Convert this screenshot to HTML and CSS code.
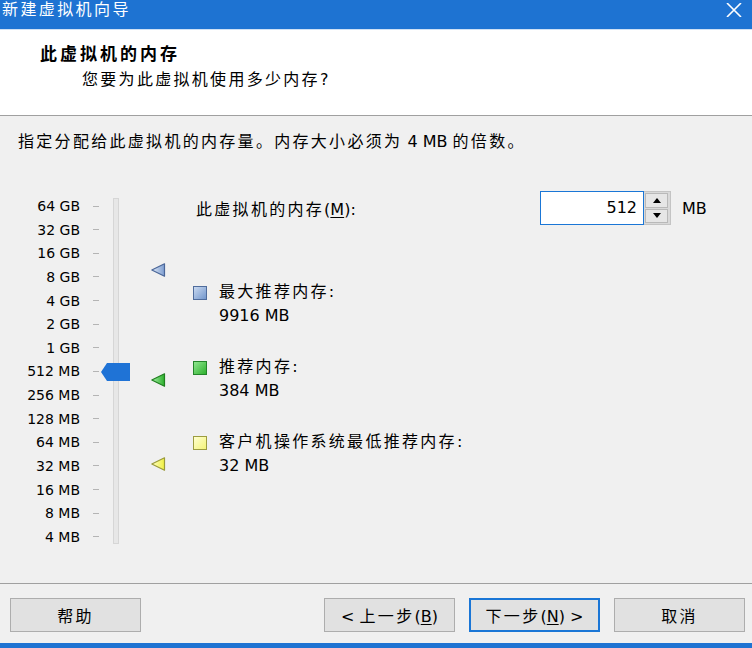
FILE: index.html
```html
<!DOCTYPE html>
<html lang="zh-CN">
<head>
<meta charset="utf-8">
<title>新建虚拟机向导</title>
<link rel="stylesheet" href="styles.css">
</head>
<body>
<div class="window">
  <div class="titlebar">
    <span class="title">新建虚拟机向导</span>
    <svg class="close" width="16" height="14" viewBox="0 0 16 14"><path d="M1 0 L15 14 M15 0 L1 14" stroke="#fff" stroke-width="1.6"/></svg>
  </div>
  <div class="header">
    <div class="h-title">此虚拟机的内存</div>
    <div class="h-sub">您要为此虚拟机使用多少内存?</div>
  </div>
  <div class="content">
    <div class="intro">指定分配给此虚拟机的内存量。内存大小必须为<span class="lat"> 4 MB </span>的倍数。</div>
    <div class="main">
      <div class="slider">
        <div class="scale">
          <div class="lbl">64 GB</div><div class="tick"></div>
          <div class="lbl">32 GB</div><div class="tick"></div>
          <div class="lbl">16 GB</div><div class="tick"></div>
          <div class="lbl">8 GB</div><div class="tick"></div>
          <div class="lbl">4 GB</div><div class="tick"></div>
          <div class="lbl">2 GB</div><div class="tick"></div>
          <div class="lbl">1 GB</div><div class="tick"></div>
          <div class="lbl">512 MB</div><div class="tick"></div>
          <div class="lbl">256 MB</div><div class="tick"></div>
          <div class="lbl">128 MB</div><div class="tick"></div>
          <div class="lbl">64 MB</div><div class="tick"></div>
          <div class="lbl">32 MB</div><div class="tick"></div>
          <div class="lbl">16 MB</div><div class="tick"></div>
          <div class="lbl">8 MB</div><div class="tick"></div>
          <div class="lbl">4 MB</div><div class="tick"></div>
        </div>
        <div class="track"></div>
        <svg class="thumb" style="top:173px" width="29" height="18" viewBox="0 0 29 18"><polygon points="0,9 6,0 29,0 29,18 6,18" fill="#1f73d6"/></svg>
        <svg class="marker" style="top:73px" width="15" height="14" viewBox="0 0 15 14">
          <defs><linearGradient id="gb" x1="0" y1="0" x2="1" y2="0"><stop offset="0" stop-color="#dfe8f6"/><stop offset="1" stop-color="#7d9dd0"/></linearGradient></defs>
          <polygon points="0.8,7 13.5,0.8 13.5,13.2" fill="url(#gb)" stroke="#4a6698" stroke-width="1.2" stroke-linejoin="round"/>
        </svg>
        <svg class="marker" style="top:183px" width="15" height="14" viewBox="0 0 15 14">
          <defs><linearGradient id="gg" x1="0" y1="0" x2="1" y2="0"><stop offset="0" stop-color="#a6eea6"/><stop offset="1" stop-color="#2cb02c"/></linearGradient></defs>
          <polygon points="0.8,7 13.5,0.8 13.5,13.2" fill="url(#gg)" stroke="#1f7f1f" stroke-width="1.2" stroke-linejoin="round"/>
        </svg>
        <svg class="marker" style="top:267px" width="15" height="14" viewBox="0 0 15 14">
          <defs><linearGradient id="gy" x1="0" y1="0" x2="1" y2="0"><stop offset="0" stop-color="#ffffc8"/><stop offset="1" stop-color="#f0f040"/></linearGradient></defs>
          <polygon points="0.8,7 13.5,0.8 13.5,13.2" fill="url(#gy)" stroke="#9a9a3a" stroke-width="1.2" stroke-linejoin="round"/>
        </svg>
      </div>
      <div class="details">
        <div class="mem-row">
          <label class="mem-label">此虚拟机的内存<span class="lat">(<u>M</u>):</span></label>
          <div class="spin">
            <div class="spin-input">512</div>
            <div class="spin-btns">
              <div class="spin-btn"><svg width="8" height="5" viewBox="0 0 8 5"><polygon points="4,0 8,5 0,5" fill="#000"/></svg></div>
              <div class="spin-btn"><svg width="8" height="5" viewBox="0 0 8 5"><polygon points="0,0 8,0 4,5" fill="#000"/></svg></div>
            </div>
          </div>
          <span class="unit">MB</span>
        </div>
        <div class="legend">
          <div class="item">
            <span class="sq sq-blue"></span>
            <div class="txt"><div>最大推荐内存:</div><div class="val">9916 MB</div></div>
          </div>
          <div class="item">
            <span class="sq sq-green"></span>
            <div class="txt"><div>推荐内存:</div><div class="val">384 MB</div></div>
          </div>
          <div class="item">
            <span class="sq sq-yellow"></span>
            <div class="txt"><div>客户机操作系统最低推荐内存:</div><div class="val">32 MB</div></div>
          </div>
        </div>
      </div>
    </div>
  </div>
  <div class="footer">
    <button class="btn">帮助</button>
    <div class="spacer"></div>
    <button class="btn"><span class="lat">&lt; </span>上一步<span class="lat">(<u>B</u>)</span></button>
    <button class="btn btn-primary">下一步<span class="lat">(<u>N</u>) &gt;</span></button>
    <button class="btn">取消</button>
  </div>
</div>
</body>
</html>
```

FILE: styles.css
```css
* { box-sizing: border-box; }
html, body {
  margin: 0;
  padding: 0;
}
body {
  width: 752px;
  height: 648px;
  overflow: hidden;
  background: #f0f0f0;
  font-family: "DejaVu Sans", "Noto Sans CJK SC", sans-serif;
  font-size: 16px;
  color: #000;
}
.window {
  width: 752px;
  height: 648px;
  display: flex;
  flex-direction: column;
  border-bottom: 5px solid #1e73d2;
}
.titlebar {
  height: 30px;
  flex: none;
  background: #1e73d2;
  border-bottom: 1px solid #cfe0f4;
  display: flex;
  justify-content: space-between;
  align-items: flex-start;
  padding: 0 10px 0 2px;
}
.title {
  color: #fff;
  line-height: 20px;
  letter-spacing: 2.4px;
}
.close { margin-top: 3px; }
.header {
  height: 86px;
  flex: none;
  background: #fff;
  border-bottom: 1px solid #a0a0a0;
  padding-top: 12px;
}
.h-title {
  padding-left: 40px;
  font-size: 17px;
  font-weight: bold;
  line-height: 24px;
  letter-spacing: 3px;
}
.h-sub {
  padding-left: 82px;
  margin-top: 3px;
  line-height: 22px;
  letter-spacing: 2.3px;
}
.lat { letter-spacing: 0; }
.content {
  flex: 1;
  overflow: hidden;
  padding-top: 15px;
}
.intro {
  padding-left: 18px;
  line-height: 22px;
  letter-spacing: 2.3px;
}
.main {
  margin-top: 37px;
  display: flex;
}
.slider {
  position: relative;
  flex: none;
  width: 193px;
  height: 360px;
  display: flex;
  align-items: flex-start;
}
.scale {
  display: grid;
  grid-template-columns: 80px 6px;
  column-gap: 13px;
  grid-auto-rows: 23.64px;
  align-items: center;
  padding-top: 4.2px;
  font-size: 14px;
}
.lbl {
  text-align: right;
  line-height: 18px;
  white-space: nowrap;
}
.tick {
  height: 1px;
  background: #b4b4b4;
}
.track {
  margin-left: 14px;
  margin-top: 8px;
  width: 6px;
  height: 346px;
  background: #e7e7e7;
  border: 1px solid #d6d6d6;
}
.thumb {
  position: absolute;
  left: 101px;
}
.marker {
  position: absolute;
  left: 151px;
}
.details {
  flex: 1;
}
.mem-row {
  height: 36px;
  display: flex;
  align-items: center;
}
.mem-label {
  width: 347px;
  padding-left: 3px;
  letter-spacing: 2.3px;
}
.spin {
  display: flex;
  height: 34px;
  width: 131px;
}
.spin-input {
  width: 104px;
  height: 34px;
  background: #fff;
  border: 1px solid #1a76d6;
  text-align: right;
  padding-right: 6px;
  line-height: 32px;
}
.spin-btns {
  width: 27px;
  height: 34px;
  background: #d9d9d9;
  border: 1px solid #c4c4c4;
  border-left: none;
  display: flex;
  flex-direction: column;
  gap: 1px;
  padding: 1px 2px 1px 1px;
}
.spin-btn {
  flex: 1;
  background: #e6e6e6;
  border: 1px solid #b9b9b9;
  display: flex;
  align-items: center;
  justify-content: center;
}
.unit {
  margin-left: 11px;
}
.legend {
  margin-top: 54px;
  display: flex;
  flex-direction: column;
  gap: 27px;
}
.item {
  display: flex;
  align-items: flex-start;
}
.sq {
  flex: none;
  width: 14px;
  height: 14px;
  margin-top: 6px;
  margin-right: 12px;
  border: 1px solid;
}
.sq-blue {
  background: linear-gradient(135deg, #c9d9f0, #7397cc);
  border-color: #4f6c9c;
}
.sq-green {
  background: linear-gradient(135deg, #8fe68f, #2eb02e);
  border-color: #23842a;
}
.sq-yellow {
  background: linear-gradient(135deg, #ffffd0, #f4f47a);
  border-color: #9c9c40;
}
.txt {
  line-height: 24px;
  letter-spacing: 2.3px;
}
.val { letter-spacing: 0; }
.footer {
  flex: none;
  height: 60px;
  border-top: 1px solid #a0a0a0;
  padding: 14px 7px 0 10px;
  display: flex;
  align-items: flex-start;
  gap: 14px;
}
.spacer { flex: 1; }
.btn {
  width: 131px;
  height: 34px;
  background: #e1e1e1;
  border: 1px solid #adadad;
  font-family: inherit;
  font-size: 16px;
  letter-spacing: 2.3px;
  color: #000;
  padding: 0;
}
.btn-primary {
  border: 2px solid #1a76d6;
}
u { text-decoration-thickness: 1px; text-underline-offset: 2px; }
```
